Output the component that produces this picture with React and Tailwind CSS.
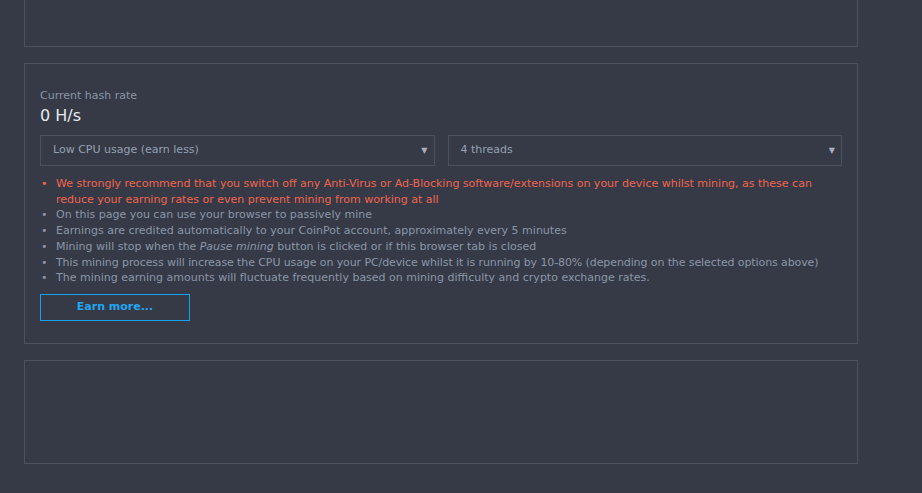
export default function App() {
  const font = { fontFamily: '"DejaVu Sans", "Noto Sans", sans-serif' };
  return (
    <div className="w-[922px] h-[493px] bg-[#353a46] overflow-hidden" style={font}>
      <div className="w-[834px] ml-[24px] flex flex-col gap-[16px]">
        <div className="h-[47px] border-x border-b border-[#4b515d]" />
        <div className="h-[281px] border border-[#4b515d] px-[15px] pt-[25px]">
          <div className="text-[11px] text-[#8c95a6] leading-[14px]">Current hash rate</div>
          <div className="text-[16px] text-[#e6e8ec] leading-[20px] mt-[3px]">0 H/s</div>
          <div className="flex gap-[13px] mt-[9px]">
            <div className="flex-1 h-[31px] border border-[#4b515d] flex items-center justify-between pl-[12px] pr-[6px] text-[11px] text-[#97a0b2]">
              <span>Low CPU usage (earn less)</span>
              <span className="text-[8px] text-[#a8aebb]">▼</span>
            </div>
            <div className="flex-1 h-[31px] border border-[#4b515d] flex items-center justify-between pl-[12px] pr-[6px] text-[11px] text-[#97a0b2]">
              <span>4 threads</span>
              <span className="text-[8px] text-[#a8aebb]">▼</span>
            </div>
          </div>
          <ul className="mt-[10px] text-[11px] leading-[15.7px] text-[#8c96a9]">
            <li className="flex text-[#f2644e]">
              <span className="w-[16px] shrink-0 pl-[1px]">•</span>
              <span>We strongly recommend that you switch off any Anti-Virus or Ad-Blocking software/extensions on your device whilst mining, as these can reduce your earning rates or even prevent mining from working at all</span>
            </li>
            <li className="flex"><span className="w-[16px] shrink-0 pl-[1px]">•</span><span>On this page you can use your browser to passively mine</span></li>
            <li className="flex"><span className="w-[16px] shrink-0 pl-[1px]">•</span><span>Earnings are credited automatically to your CoinPot account, approximately every 5 minutes</span></li>
            <li className="flex"><span className="w-[16px] shrink-0 pl-[1px]">•</span><span>Mining will stop when the <em>Pause mining</em> button is clicked or if this browser tab is closed</span></li>
            <li className="flex"><span className="w-[16px] shrink-0 pl-[1px]">•</span><span className="tracking-[-0.1px]">This mining process will increase the CPU usage on your PC/device whilst it is running by 10-80% (depending on the selected options above)</span></li>
            <li className="flex"><span className="w-[16px] shrink-0 pl-[1px]">•</span><span>The mining earning amounts will fluctuate frequently based on mining difficulty and crypto exchange rates.</span></li>
          </ul>
          <button className="mt-[8px] w-[150px] h-[27px] border border-solid border-[#14a4f2] text-[#22a6f0] text-[11px] font-semibold">Earn more...</button>
        </div>
        <div className="h-[104px] border border-[#4b515d]" />
      </div>
    </div>
  );
}
